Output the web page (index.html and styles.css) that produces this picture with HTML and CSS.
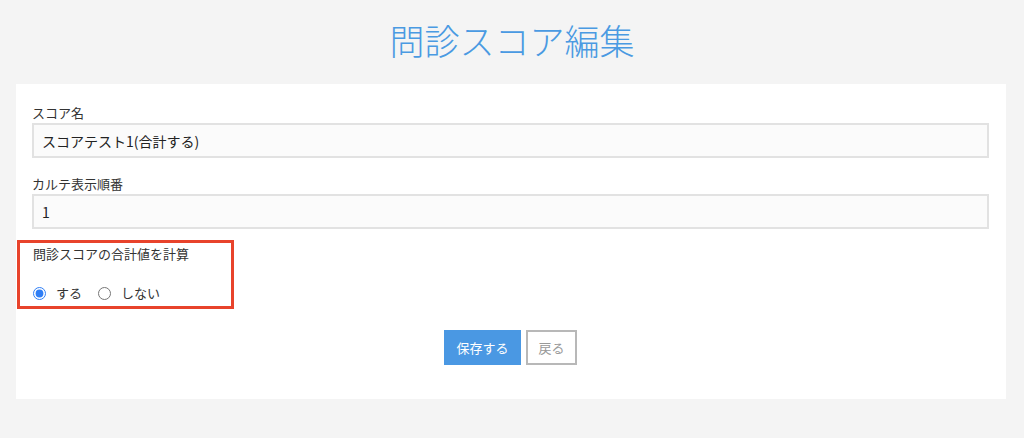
FILE: index.html
```html
<!DOCTYPE html>
<html lang="ja">
<head>
<meta charset="utf-8">
<title>問診スコア編集</title>
<link rel="stylesheet" href="styles.css">
</head>
<body>
<h1 class="title">問診スコア編集</h1>
<div class="card">
  <div class="field">
    <label class="label">スコア名</label>
    <input class="input" type="text" value="スコアテスト1(合計する)">
  </div>
  <div class="field field-next">
    <label class="label">カルテ表示順番</label>
    <input class="input" type="text" value="1">
  </div>
  <div class="group">
    <div class="label">問診スコアの合計値を計算</div>
    <div class="radios">
      <label class="radio"><input type="radio" name="sum" checked><span>する</span></label>
      <label class="radio"><input type="radio" name="sum"><span>しない</span></label>
    </div>
  </div>
  <div class="actions">
    <button class="btn btn-primary">保存する</button>
    <button class="btn btn-default">戻る</button>
  </div>
</div>
</body>
</html>
```
FILE: styles.css
```css
html, body {
  margin: 0;
  padding: 0;
  background: #f4f4f4;
  font-family: "Noto Sans CJK JP", "Noto Sans", sans-serif;
  color: #333;
}
.title {
  margin: 0;
  height: 84px;
  box-sizing: border-box;
  padding-top: 16px;
  text-align: center;
  font-size: 35px;
  line-height: 48px;
  font-weight: 300;
  color: #4a9ae2;
}
.card {
  background: #fff;
  margin: 0 18px 0 16px;
  padding: 20px 17px 35px 16px;
  height: 315px;
  box-sizing: border-box;
}
.field {
  display: flex;
  flex-direction: column;
}
.field-next {
  margin-top: 17px;
}
.label {
  font-size: 13px;
  line-height: 18px;
  height: 18px;
  margin-bottom: 1px;
  color: #333;
}
.input {
  height: 35px;
  box-sizing: border-box;
  border: 2px solid #e2e2e2;
  background: #fbfbfb;
  padding: 0 8px;
  font-family: inherit;
  font-size: 14px;
  color: #222;
  outline: none;
}
.group {
  border: 3px solid #e8432b;
  width: 217px;
  box-sizing: border-box;
  margin: 11px 0 0 -15px;
  padding: 2px 12px 4px 13px;
}
.radios {
  display: flex;
  align-items: center;
  gap: 16px;
  height: 18px;
  margin-top: 21px;
}
.radio {
  display: flex;
  align-items: center;
  font-size: 13px;
  line-height: 18px;
}
.radio input {
  margin: 0 10px 0 0;
  width: 13px;
  height: 13px;
  accent-color: #2f7ef5;
}
.actions {
  display: flex;
  justify-content: center;
  gap: 5px;
  margin-top: 21px;
}
.btn {
  height: 35px;
  box-sizing: border-box;
  font-family: inherit;
  font-size: 13px;
  padding: 0;
  white-space: nowrap;
  text-align: center;
  cursor: pointer;
}
.btn-primary {
  background: #4a98e3;
  border: 1px solid #4a98e3;
  color: #fff;
  width: 77px;
}
.btn-default {
  background: #fff;
  border: 2px solid #b8b8b8;
  color: #999;
  width: 51px;
}
```
